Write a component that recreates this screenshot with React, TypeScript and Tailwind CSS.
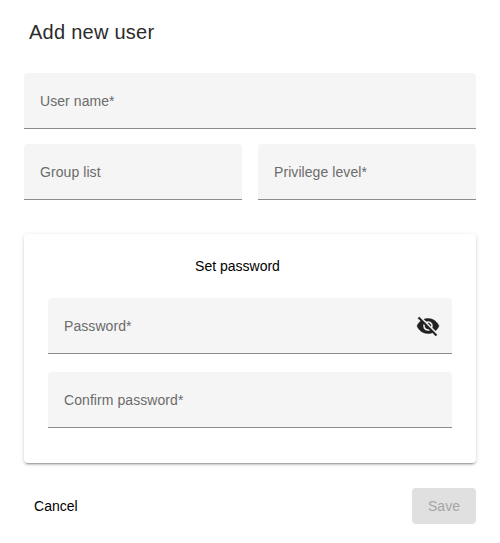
import React from "react";

function Field({ label, className = "", icon }: { label: string; className?: string; icon?: React.ReactNode }) {
  return (
    <div className={`flex h-14 items-center justify-between rounded-t border-b border-[#8c8c8c] bg-[#f5f5f5] pl-4 pr-3 ${className}`}>
      <span className="text-sm tracking-[0.07px] text-[#6b6b6b]">{label}</span>
      {icon}
    </div>
  );
}

export default function App() {
  return (
    <div className="flex h-[543px] w-[500px] flex-col bg-white px-6 font-['Liberation_Sans',Arial,sans-serif]">
      <h1 className="ml-[5px] mt-[18px] h-[28px] text-xl leading-[28px] tracking-[0.25px] text-[#2b2b2b]">Add new user</h1>
      <Field label="User name*" className="mt-[27px]" />
      <div className="mt-[15px] flex gap-4">
        <Field label="Group list" className="flex-1" />
        <Field label="Privilege level*" className="flex-1" />
      </div>
      <section className="mt-[34px] flex h-[229px] flex-col rounded bg-white px-6 shadow-[0_3px_1px_-2px_rgba(0,0,0,0.2),0_2px_2px_0_rgba(0,0,0,0.14),0_1px_5px_0_rgba(0,0,0,0.12)]">
        <h2 className="mt-[23px] h-[19px] pr-[25px] text-center text-sm leading-[19px] text-black">Set password</h2>
        <Field
          label="Password*"
          className="mt-[22px]"
          icon={
            <svg width="24" height="24" viewBox="0 0 24 24" fill="#212121" stroke="#212121" strokeWidth="0.5" aria-hidden="true">
              <path d="M12 7c2.76 0 5 2.24 5 5 0 .65-.13 1.26-.36 1.83l2.92 2.92c1.51-1.26 2.7-2.89 3.43-4.75-1.73-4.39-6-7.5-11-7.5-1.4 0-2.74.25-3.98.7l2.16 2.16C10.74 7.13 11.35 7 12 7zM2 4.27l2.28 2.28.46.46C3.08 8.3 1.78 10.02 1 12c1.73 4.39 6 7.5 11 7.5 1.55 0 3.03-.3 4.38-.84l.42.42L19.73 22 21 20.73 3.27 3 2 4.27zM7.53 9.8l1.55 1.55c-.05.21-.08.43-.08.65 0 1.66 1.34 3 3 3 .22 0 .44-.03.65-.08l1.55 1.55c-.67.33-1.41.53-2.2.53-2.76 0-5-2.24-5-5 0-.79.2-1.53.53-2.2zm4.31-.78l3.15 3.15.02-.16c0-1.66-1.34-3-3-3l-.17.01z" />
            </svg>
          }
        />
        <Field label="Confirm password*" className="mt-[18px]" />
      </section>
      <div className="mt-[25px] flex items-center justify-between">
        <button className="h-9 px-[10px] text-sm tracking-[0.03px] text-black">Cancel</button>
        <button className="h-9 w-16 rounded bg-[#e0e0e0] text-sm text-[#a6a6a6]">Save</button>
      </div>
    </div>
  );
}
